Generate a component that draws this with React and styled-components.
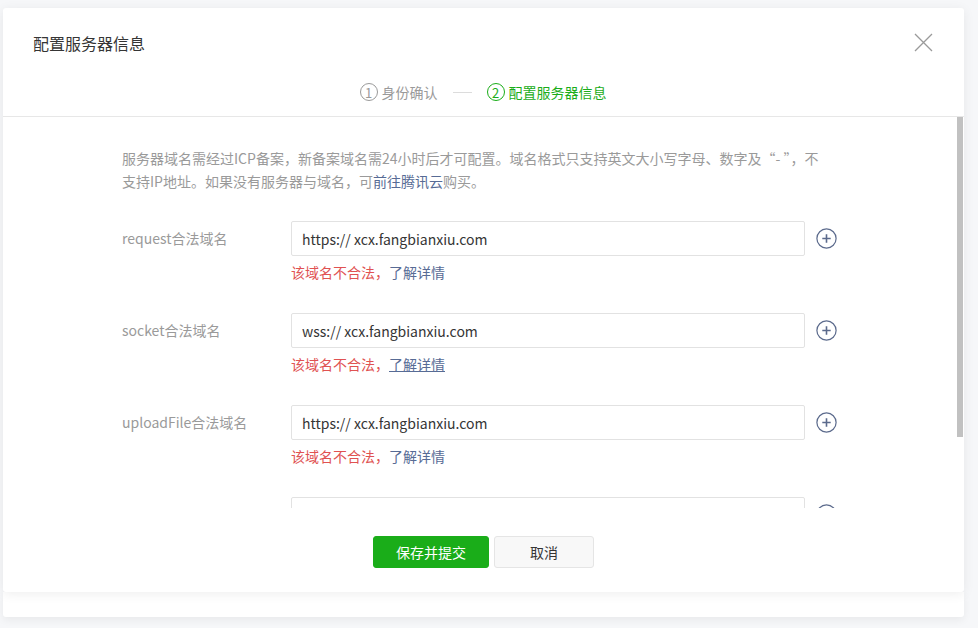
import React from 'react';
import styled, { createGlobalStyle } from 'styled-components';

const GlobalStyle = createGlobalStyle`
  html, body {
    margin: 0;
    padding: 0;
    background: #f6f7f9;
    font-family: "Noto Sans CJK SC", "Noto Sans", sans-serif;
    color: #353535;
  }
`;

const Page = styled.div`
  width: 978px;
  height: 628px;
  box-sizing: border-box;
  padding: 8px 14px 0 3px;
  display: flex;
  flex-direction: column;
  overflow: hidden;
`;

const Dialog = styled.div`
  position: relative;
  z-index: 1;
  height: 584px;
  background: #fff;
  border-radius: 3px;
  box-shadow: 0 2px 12px rgba(0, 0, 0, 0.07);
  display: flex;
  flex-direction: column;
`;

const BackCard = styled.div`
  height: 25px;
  background: #fff;
  border-radius: 0 0 3px 3px;
  box-shadow: 0 3px 8px rgba(0, 0, 0, 0.06);
`;

const Header = styled.div`
  height: 109px;
  box-sizing: border-box;
  border-bottom: 1px solid #e7e7e7;
  display: flex;
  flex-direction: column;
  padding: 0 31px 0 30px;
`;

const HeaderTop = styled.div`
  display: flex;
  justify-content: space-between;
  align-items: center;
  height: 70px;
`;

const Title = styled.h2`
  margin: 0;
  font-size: 16px;
  font-weight: 400;
  color: #353535;
`;

const CloseButton = styled.button`
  border: 0;
  background: none;
  padding: 0;
  width: 19px;
  height: 19px;
  cursor: pointer;
  display: flex;
  margin-top: -2px;
`;

const Steps = styled.div`
  display: flex;
  justify-content: center;
  align-items: center;
  gap: 15px;
  font-size: 14px;
  margin-top: 4px;
`;

const Step = styled.div`
  display: flex;
  align-items: center;
  gap: 4px;
  color: ${(p) => (p.$active ? '#1aad19' : '#9a9a9a')};
`;

const StepNum = styled.span`
  width: 16px;
  height: 16px;
  border: 1px solid currentColor;
  border-radius: 50%;
  display: flex;
  align-items: center;
  justify-content: center;
  font-size: 13px;
  line-height: 1;
`;

const StepLine = styled.span`
  width: 19px;
  height: 1px;
  background: #dcdcdc;
`;

const Body = styled.div`
  flex: 1;
  overflow-y: auto;
  padding: 30px 0 0 119px;

  &::-webkit-scrollbar {
    width: 0;
  }
`;

const ScrollThumb = styled.div`
  position: absolute;
  top: 109px;
  right: 1px;
  width: 6px;
  height: 320px;
  background: #c1c1c1;
`;

const Notice = styled.p`
  margin: 0 0 28px;
  width: 706px;
  font-size: 14px;
  line-height: 23px;
  color: #9a9a9a;
`;

const Link = styled.a`
  color: #576b95;
  text-decoration: ${(p) => (p.$underline ? 'underline' : 'none')};
  cursor: pointer;
`;

const Row = styled.div`
  display: flex;
  align-items: flex-start;
  margin-bottom: 31px;
`;

const Label = styled.label`
  width: 169px;
  flex-shrink: 0;
  font-size: 14px;
  line-height: 35px;
  color: #9a9a9a;
`;

const Field = styled.div`
  display: flex;
  flex-direction: column;
  gap: 6px;
`;

const InputLine = styled.div`
  display: flex;
  align-items: center;
  gap: 11px;
`;

const Input = styled.input`
  width: 514px;
  height: 35px;
  box-sizing: border-box;
  border: 1px solid #e2e2e2;
  border-radius: 2px;
  padding: 0 10px;
  font-family: inherit;
  font-size: 14px;
  color: #353535;
  outline: none;
`;

const AddButton = styled.button`
  border: 0;
  background: none;
  padding: 0;
  width: 21px;
  height: 21px;
  display: flex;
  cursor: pointer;
`;

const Error = styled.div`
  font-size: 14px;
  line-height: 20px;
  color: #e05252;
`;

const Footer = styled.div`
  height: 84px;
  box-sizing: border-box;
  padding-top: 28px;
  display: flex;
  justify-content: center;
  gap: 5px;
`;

const Button = styled.button`
  width: ${(p) => (p.$primary ? '116px' : '100px')};
  height: 32px;
  border-radius: 3px;
  font-family: inherit;
  font-size: 14px;
  cursor: pointer;
  border: 1px solid ${(p) => (p.$primary ? '#1aad19' : '#e5e5e5')};
  background: ${(p) => (p.$primary ? '#1aad19' : '#f8f8f8')};
  color: ${(p) => (p.$primary ? '#fff' : '#353535')};
`;

const CloseIcon = () => (
  <svg width="19" height="19" viewBox="0 0 19 19">
    <path d="M1 1 L18 18 M18 1 L1 18" stroke="#9a9a9a" strokeWidth="1.3" fill="none" />
  </svg>
);

const PlusIcon = () => (
  <svg width="21" height="21" viewBox="0 0 21 21">
    <circle cx="10.5" cy="10.5" r="9.6" stroke="#5b6a8c" strokeWidth="1.2" fill="none" />
    <path d="M10.5 6.3 V14.7 M6.3 10.5 H14.7" stroke="#5b6a8c" strokeWidth="1.6" />
  </svg>
);

const domains = [
  { label: 'request合法域名', value: 'https:// xcx.fangbianxiu.com' },
  { label: 'socket合法域名', value: 'wss:// xcx.fangbianxiu.com', hover: true },
  { label: 'uploadFile合法域名', value: 'https:// xcx.fangbianxiu.com' },
  { label: 'downloadFile合法域名', value: '' },
];

export default function App() {
  return (
    <Page>
      <GlobalStyle />
      <Dialog>
        <Header>
          <HeaderTop>
            <Title>配置服务器信息</Title>
            <CloseButton aria-label="关闭">
              <CloseIcon />
            </CloseButton>
          </HeaderTop>
          <Steps>
            <Step>
              <StepNum>1</StepNum>身份确认
            </Step>
            <StepLine />
            <Step $active>
              <StepNum>2</StepNum>配置服务器信息
            </Step>
          </Steps>
        </Header>
        <Body>
          <Notice>
            服务器域名需经过ICP备案，新备案域名需24小时后才可配置。域名格式只支持英文大小写字母、数字及“- ”，不支持IP地址。如果没有服务器与域名，可
            <Link>前往腾讯云</Link>购买。
          </Notice>
          {domains.map((d) => (
            <Row key={d.label}>
              <Label>{d.label}</Label>
              <Field>
                <InputLine>
                  <Input defaultValue={d.value} />
                  <AddButton aria-label="添加">
                    <PlusIcon />
                  </AddButton>
                </InputLine>
                {d.value && (
                  <Error>
                    该域名不合法，<Link $underline={d.hover}>了解详情</Link>
                  </Error>
                )}
              </Field>
            </Row>
          ))}
        </Body>
        <ScrollThumb />
        <Footer>
          <Button $primary>保存并提交</Button>
          <Button>取消</Button>
        </Footer>
      </Dialog>
      <BackCard />
    </Page>
  );
}
